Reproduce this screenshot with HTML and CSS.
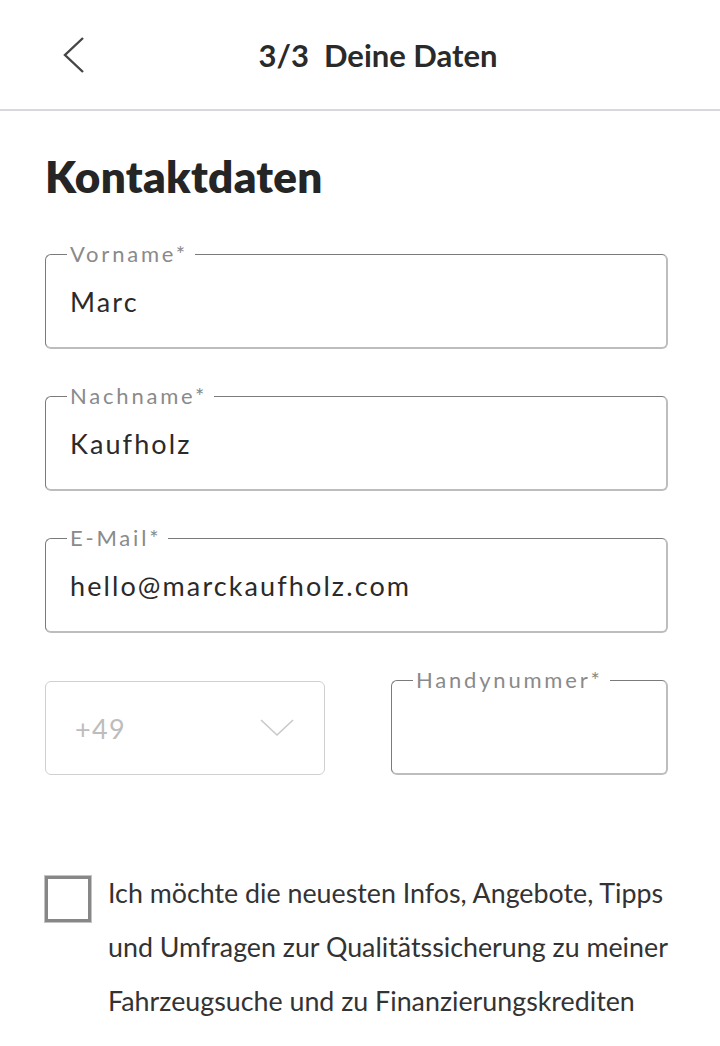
FILE: index.html
```html
<!DOCTYPE html>
<html lang="de">
<head>
<meta charset="utf-8">
<title>3/3 Deine Daten</title>
<link rel="stylesheet" href="styles.css">
</head>
<body>
<header class="topbar">
  <button class="back" aria-label="Zurück">
    <svg width="24" height="38" viewBox="0 0 24 38"><polyline points="21,2 3,19 21,36" fill="none" stroke="#454545" stroke-width="2.4"/></svg>
  </button>
  <h2 class="title">3/3&nbsp;&nbsp;Deine Daten</h2>
  <span></span>
</header>
<main class="content">
  <h1 class="heading">Kontaktdaten</h1>
  <fieldset class="field">
    <legend class="field-label">Vorname*</legend>
    <div class="field-value">Marc</div>
  </fieldset>
  <fieldset class="field">
    <legend class="field-label">Nachname*</legend>
    <div class="field-value">Kaufholz</div>
  </fieldset>
  <fieldset class="field">
    <legend class="field-label">E-Mail*</legend>
    <div class="field-value">hello@marckaufholz.com</div>
  </fieldset>
  <div class="phone-row">
    <div class="select">
      <span class="select-value">+49</span>
      <svg width="34" height="18" viewBox="0 0 34 18"><polyline points="1,1 17,16 33,1" fill="none" stroke="#c9c9c9" stroke-width="1.6"/></svg>
    </div>
    <fieldset class="field field-phone">
      <legend class="field-label">Handynummer*</legend>
      <div class="field-value">&nbsp;</div>
    </fieldset>
  </div>
  <label class="consent">
    <span class="checkbox"></span>
    <span class="consent-text">Ich möchte die neuesten Infos, Angebote, Tipps<br>und Umfragen zur Qualitätssicherung zu meiner<br>Fahrzeugsuche und zu Finanzierungskrediten</span>
  </label>
</main>
</body>
</html>
```
FILE: styles.css
```css
* { box-sizing: border-box; }
html, body { margin: 0; padding: 0; background: #fff; }
body { font-family: Lato, "Open Sans", sans-serif; color: #2c2c2c; width: 720px; overflow: hidden; }

.topbar {
  height: 111px;
  border-bottom: 2px solid #d8d8dc;
  display: grid;
  grid-template-columns: 130px 1fr 94px;
  align-items: center;
}
.back {
  background: none; border: 0; padding: 0 0 0 62px; margin: 0;
  display: flex; align-items: center; height: 40px; justify-content: flex-start;
}
.back svg { display: block; }
.title {
  margin: 0; text-align: center; font-size: 31px; font-weight: 700; color: #2a2a2a;
  letter-spacing: 0;
}

.content { padding: 0 52px 0 45px; }
.heading {
  margin: 41px 0 42px 0; font-size: 44px; font-weight: 800; color: #252525; line-height: 48px;
  letter-spacing: 0.3px;
}

.field {
  margin: 0 0 35px 0;
  padding: 0 22px 0 24px;
  border-style: solid;
  border-width: 1px 2px 2px 1px;
  border-color: #7b7b7b #bdbdbd #bdbdbd #7b7b7b;
  border-radius: 6px;
  min-width: 0;
}
.field-label {
  font-size: 22px; line-height: 24px; color: #8a8a8a; letter-spacing: 2.8px;
  padding: 0 7px 0 3px; margin-left: -3px;
}
.field-value {
  padding: 18px 0 27px; line-height: 36px; font-size: 27px; letter-spacing: 2.1px; color: #2a2a2a;
  white-space: nowrap;
}

.phone-row {
  display: grid; grid-template-columns: 280px 1fr; column-gap: 66px; align-items: end;
}
.phone-row .field { margin-bottom: 0; }
.select {
  height: 94px; border: 1px solid #d0d0d0; border-radius: 6px;
  display: flex; align-items: center; justify-content: space-between;
  padding: 0 30px 0 29px; margin-bottom: 0;
}
.select-value { font-size: 27px; color: #bdbdbd; letter-spacing: 1.4px; }
.select svg { display: block; }

.consent { display: flex; align-items: flex-start; gap: 17px; margin-top: 91px; margin-right: -40px; }
.checkbox {
  flex: 0 0 auto; width: 46px; height: 46px; border: 3px solid #878787; margin-top: 10px;
  box-shadow: 0 0 0 1px #c4c4c4;
}
.consent-text { font-size: 26.8px; line-height: 54px; color: #333; white-space: nowrap; }
```
